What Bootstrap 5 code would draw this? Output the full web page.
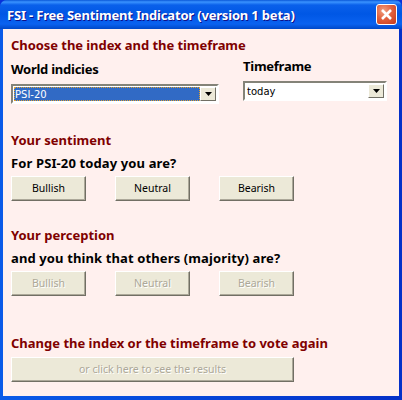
<!DOCTYPE html>
<html lang="en">
<head>
<meta charset="utf-8">
<title>FSI</title>
<link rel="stylesheet" href="https://cdn.jsdelivr.net/npm/bootstrap@5.3.0/dist/css/bootstrap.min.css">
<style>
html,body{margin:0;height:400px;overflow:hidden;background:#0831d9}
.xp-win{width:402px;height:400px;font-family:"Noto Sans",sans-serif;padding:0 3px 4px 3px;border-radius:7px 7px 0 0;
  background:linear-gradient(90deg,#0a5ae8 0,#0a5ae8 3px,#0430c8 399px,#0430c8 100%)}
.xp-title{height:29px;margin:0 -3px;padding:0 5px 0 7px;color:#fff;font-weight:700;font-size:13px;letter-spacing:-.18px;text-shadow:1px 1px 0 #0f1089;border-radius:7px 7px 0 0;
  background:linear-gradient(180deg,#0a58d8 0,#3a93ff 2px,#0a60ea 5px,#0057e5 14px,#0a62f0 24px,#0048c8 29px)}
.xp-title-text{padding-top:2px}
.xp-close{width:21px;height:21px;border:1px solid #fff;border-radius:3px;background:radial-gradient(circle at 35% 30%,#f0a080 0,#e2623f 45%,#c4381a 100%)}
.xp-client{height:367px;background:#fff0ee;padding:0 8px}
.xp-h{color:#800000;font-weight:700;font-size:13px;line-height:16px}
.xp-l{color:#000;font-weight:700;font-size:13px;line-height:16px}
.first{margin-top:8px;letter-spacing:-.06px}
.colA{width:208px;padding-top:8px}
.colB{width:144px;margin-left:24px;padding-top:5px}
.colA .xp-l,.colB .xp-l{letter-spacing:-.25px}
.selgap{margin-top:7px}
.xp-select{height:20px;background:#fff;color:#000;border:2px solid;border-color:#848378 #fff #fff #848378;padding:1px}
.xp-select .val{font-family:"DejaVu Sans",sans-serif;font-size:10px;line-height:13px;padding:1px 0 0 1px}
.xp-select .on{background:#316ac5;color:#fff;outline:1px dotted #e0a030;outline-offset:-1px}
.xp-arrow{width:16px;flex:none;background:#ece9d8;border:1px solid;border-color:#fff #716f64 #716f64 #fff}
.xp-btn{width:75px;height:25px;padding:0 0 1px;font-size:10.5px;color:#000;background:#ece9d8;border:1px solid;border-color:#fff #716f64 #716f64 #fff;box-shadow:inset -1px -1px 0 #aca899;border-radius:0;line-height:1}
.xp-btn:disabled{color:#aca899;text-shadow:1px 1px 0 #fff;opacity:1;background:#ece9d8;border-color:#fff #716f64 #716f64 #fff}
.xp-wide{width:283px}
.xp-row{gap:29px}
.sec1{margin-top:28px}.sec2{margin-top:26px}.sec3{margin-top:39px}
.sub{margin-top:7px;letter-spacing:.12px}.rowbtn{margin-top:5px}.widegap{margin-top:6px}
</style>
</head>
<body>
<div class="xp-win d-flex flex-column">
  <div class="xp-title d-flex align-items-center justify-content-between">
    <span class="xp-title-text">FSI - Free Sentiment Indicator (version 1 beta)</span>
    <span class="xp-close d-flex align-items-center justify-content-center">
      <svg width="13" height="13" viewBox="0 0 13 13"><path d="M2 2 L11 11 M11 2 L2 11" stroke="#fff" stroke-width="2.6"/></svg>
    </span>
  </div>
  <div class="xp-client">
    <div class="xp-h first">Choose the index and the timeframe</div>
    <div class="d-flex">
      <div class="colA">
        <div class="xp-l">World indicies</div>
        <div class="xp-select d-flex selgap"><div class="val on flex-grow-1">PSI-20</div><div class="xp-arrow d-flex align-items-center justify-content-center"><svg width="7" height="4" viewBox="0 0 7 4"><path d="M0 0H7L3.5 4Z" fill="#000"/></svg></div></div>
      </div>
      <div class="colB">
        <div class="xp-l">Timeframe</div>
        <div class="xp-select d-flex selgap"><div class="val flex-grow-1">today</div><div class="xp-arrow d-flex align-items-center justify-content-center"><svg width="7" height="4" viewBox="0 0 7 4"><path d="M0 0H7L3.5 4Z" fill="#000"/></svg></div></div>
      </div>
    </div>
    <div class="xp-h sec1">Your sentiment</div>
    <div class="xp-l sub">For PSI-20 today you are?</div>
    <div class="d-flex xp-row rowbtn">
      <button class="btn xp-btn">Bullish</button><button class="btn xp-btn">Neutral</button><button class="btn xp-btn">Bearish</button>
    </div>
    <div class="xp-h sec2">Your perception</div>
    <div class="xp-l sub">and you think that others (majority) are?</div>
    <div class="d-flex xp-row rowbtn">
      <button class="btn xp-btn" disabled>Bullish</button><button class="btn xp-btn" disabled>Neutral</button><button class="btn xp-btn" disabled>Bearish</button>
    </div>
    <div class="xp-h sec3">Change the index or the timeframe to vote again</div>
    <button class="btn xp-btn xp-wide widegap" disabled>or click here to see the results</button>
  </div>
</div>
</body>
</html>
